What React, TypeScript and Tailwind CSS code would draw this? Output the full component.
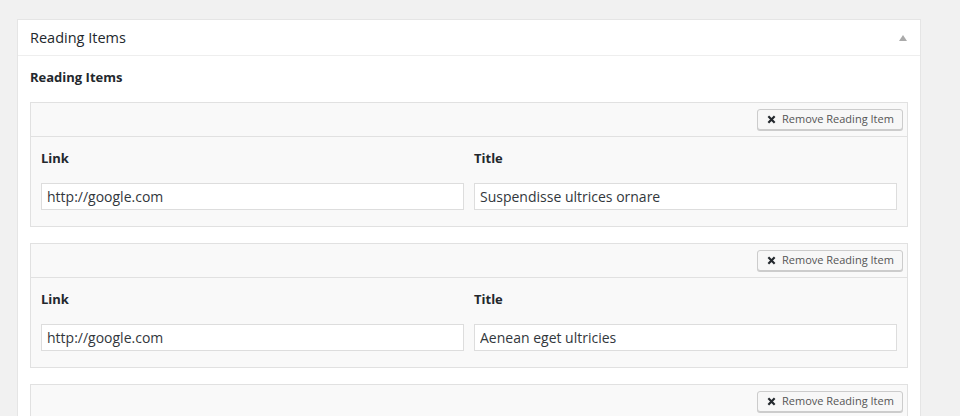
import React from "react";

interface ReadingItem {
  link: string;
  title: string;
}

const items: ReadingItem[] = [
  { link: "http://google.com", title: "Suspendisse ultrices ornare" },
  { link: "http://google.com", title: "Aenean eget ultricies" },
  { link: "http://google.com", title: "Donec sed odio dui" },
];

const RemoveButton: React.FC = () => (
  <button className="flex h-[21px] w-[146px] items-center rounded-[3px] border border-[#cccccc] bg-[#f7f7f7] pl-[9px] text-[11px] text-[#555] shadow-[0_1px_0_#cccccc]">
    <svg width="9" height="9" viewBox="0 0 10 10" className="mr-[6px]">
      <path d="M1.5 1.5 L8.5 8.5 M8.5 1.5 L1.5 8.5" stroke="#23282d" strokeWidth="2.4" />
    </svg>
    Remove Reading Item
  </button>
);

const ItemRow: React.FC<{ item: ReadingItem }> = ({ item }) => (
  <div className="border border-[#e1e1e1] bg-[#f9f9f9]">
    <div className="flex h-[34px] items-start justify-end border-b border-[#e1e1e1] pr-[4px] pt-[6px]">
      <RemoveButton />
    </div>
    <div className="grid grid-cols-2 gap-x-[10px] px-[10px] pb-[16px] pt-[12px]">
      <div className="text-[13px] font-bold leading-[18px] text-[#23282d]">Link</div>
      <div className="text-[13px] font-bold leading-[18px] text-[#23282d]">Title</div>
      <input
        readOnly
        value={item.link}
        className="mt-[16px] h-[27px] border border-[#dddddd] bg-white px-[5px] text-[14px] text-[#32373c] outline-none"
      />
      <input
        readOnly
        value={item.title}
        className="mt-[16px] h-[27px] border border-[#dddddd] bg-white px-[5px] text-[14px] text-[#32373c] outline-none"
      />
    </div>
  </div>
);

export default function App() {
  return (
    <div
      className="h-screen overflow-hidden bg-[#f1f1f1] pl-[17px] pr-[39px] pt-[19px]"
      style={{ fontFamily: '"Open Sans", sans-serif' }}
    >
      <div className="w-[904px] border border-[#e5e5e5] bg-white">
        <div className="flex h-[36px] items-center justify-between border-b border-[#eeeeee] pl-[12px] pr-[13px]">
          <h2 className="text-[14.5px] text-[#23282d]">Reading Items</h2>
          <svg width="8" height="6" viewBox="0 0 8 6">
            <path d="M0 6 L4 0 L8 6 Z" fill="#aaaaaa" />
          </svg>
        </div>
        <div className="px-[12px] pt-[12px]">
          <div className="text-[13px] font-bold leading-[18px] text-[#23282d]">Reading Items</div>
          <div className="mt-[16px] flex flex-col gap-[16px]">
            {items.map((item, index) => (
              <ItemRow key={index} item={item} />
            ))}
          </div>
        </div>
      </div>
    </div>
  );
}
